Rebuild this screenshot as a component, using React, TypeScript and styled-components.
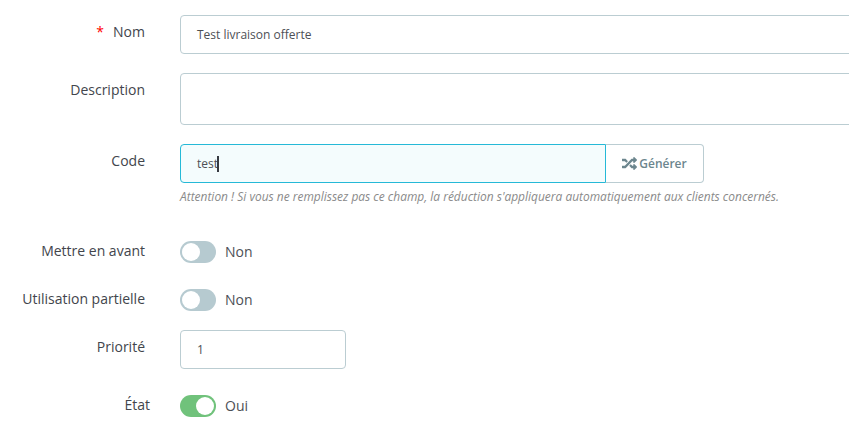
import styled, { createGlobalStyle } from 'styled-components';
import { FaRandom } from 'react-icons/fa';

const GlobalStyle = createGlobalStyle`
  html, body {
    margin: 0;
    padding: 0;
    background: #fff;
    overflow: hidden;
  }
  body {
    font-family: "Open Sans", sans-serif;
    color: #363a41;
  }
`;

export default function App() {
  return (
    <>
      <GlobalStyle />
      <Form>
        <Row $mb={19}>
          <Label>
            <Required>*</Required>Nom
          </Label>
          <FieldWide>
            <Input>Test livraison offerte</Input>
          </FieldWide>
        </Row>
        <Row $mb={19}>
          <Label>Description</Label>
          <FieldWide>
            <TextArea />
          </FieldWide>
        </Row>
        <Row $mb={0}>
          <Label>Code</Label>
          <CodeGroup>
            <CodeInput>
              test
              <Caret />
            </CodeInput>
            <GenerateButton>
              <FaRandom size={15} />
              Générer
            </GenerateButton>
          </CodeGroup>
        </Row>
        <Row $mb={37}>
          <span />
          <Hint>
            Attention ! Si vous ne remplissez pas ce champ, la réduction s'appliquera automatiquement aux clients concernés.
          </Hint>
        </Row>
        <SwitchRow $mb={26}>
          <SwitchLabel>Mettre en avant</SwitchLabel>
          <SwitchField>
            <Toggle $on={false}>
              <Knob />
            </Toggle>
            <ToggleText>Non</ToggleText>
          </SwitchField>
        </SwitchRow>
        <SwitchRow $mb={19}>
          <SwitchLabel>Utilisation partielle</SwitchLabel>
          <SwitchField>
            <Toggle $on={false}>
              <Knob />
            </Toggle>
            <ToggleText>Non</ToggleText>
          </SwitchField>
        </SwitchRow>
        <Row $mb={26}>
          <Label>Priorité</Label>
          <NumberInput>1</NumberInput>
        </Row>
        <SwitchRow $mb={0}>
          <StateLabel>État</StateLabel>
          <SwitchField>
            <Toggle $on={true}>
              <Knob />
            </Toggle>
            <ToggleText>Oui</ToggleText>
          </SwitchField>
        </SwitchRow>
      </Form>
    </>
  );
}

const Form = styled.div`
  display: flex;
  flex-direction: column;
  width: 849px;
  padding-top: 15px;
  overflow: hidden;
`;

const Row = styled.div<{ $mb: number }>`
  display: grid;
  grid-template-columns: 145px 1fr;
  column-gap: 35px;
  margin-bottom: ${(p) => p.$mb}px;
`;

const SwitchRow = styled(Row)`
  align-items: center;
  height: 22px;
`;

const Label = styled.div`
  text-align: right;
  font-size: 14px;
  line-height: 20px;
  padding-top: 7px;
  color: #42454c;
`;

const SwitchLabel = styled.div`
  text-align: right;
  font-size: 14px;
  line-height: 20px;
  margin-top: -2px;
  white-space: nowrap;
  color: #42454c;
`;

const StateLabel = styled(SwitchLabel)`
  margin-right: -5px;
`;

const Required = styled.span`
  color: #f00;
  margin-right: 9px;
`;

const FieldWide = styled.div`
  display: flex;
  margin-right: -8px;
`;

const Input = styled.div`
  box-sizing: border-box;
  width: 100%;
  height: 39px;
  padding: 0 16px;
  display: flex;
  align-items: center;
  background: #fff;
  border: 1px solid #bbcdd2;
  border-radius: 4px;
  font-size: 12px;
  color: #4d5056;
`;

const TextArea = styled(Input)`
  height: 52px;
`;

const CodeGroup = styled.div`
  display: flex;
`;

const CodeInput = styled(Input)`
  width: 426px;
  background: #f4fcfd;
  border-color: #25b9d7;
  border-radius: 4px 0 0 4px;
`;

const Caret = styled.span`
  display: inline-block;
  width: 2px;
  height: 16px;
  margin-left: -1px;
  background: #363a41;
`;

const GenerateButton = styled.div`
  box-sizing: border-box;
  width: 99px;
  height: 39px;
  display: flex;
  align-items: center;
  justify-content: center;
  gap: 2px;
  margin-left: -1px;
  border: 1px solid #bbcdd2;
  border-left-color: #25b9d7;
  border-radius: 0 4px 4px 0;
  background: #fff;
  color: #6c868e;
  font-size: 12px;
  font-weight: 600;
`;

const Hint = styled.div`
  font-size: 11.96px;
  line-height: 15px;
  padding-top: 6px;
  font-style: italic;
  color: #8a8a8a;
  white-space: nowrap;
`;

const SwitchField = styled.div`
  display: flex;
  align-items: center;
  gap: 9px;
`;

const Toggle = styled.div<{ $on: boolean }>`
  box-sizing: border-box;
  width: 36px;
  height: 22px;
  padding: 2px;
  display: flex;
  justify-content: ${(p) => (p.$on ? 'flex-end' : 'flex-start')};
  background: ${(p) => (p.$on ? '#70c27b' : '#b6cad0')};
  border-radius: 11px;
`;

const Knob = styled.span`
  width: 18px;
  height: 18px;
  border-radius: 50%;
  background: #fff;
`;

const ToggleText = styled.span`
  font-size: 14px;
  line-height: 20px;
  color: #4d5056;
`;

const NumberInput = styled(Input)`
  width: 166px;
`;
